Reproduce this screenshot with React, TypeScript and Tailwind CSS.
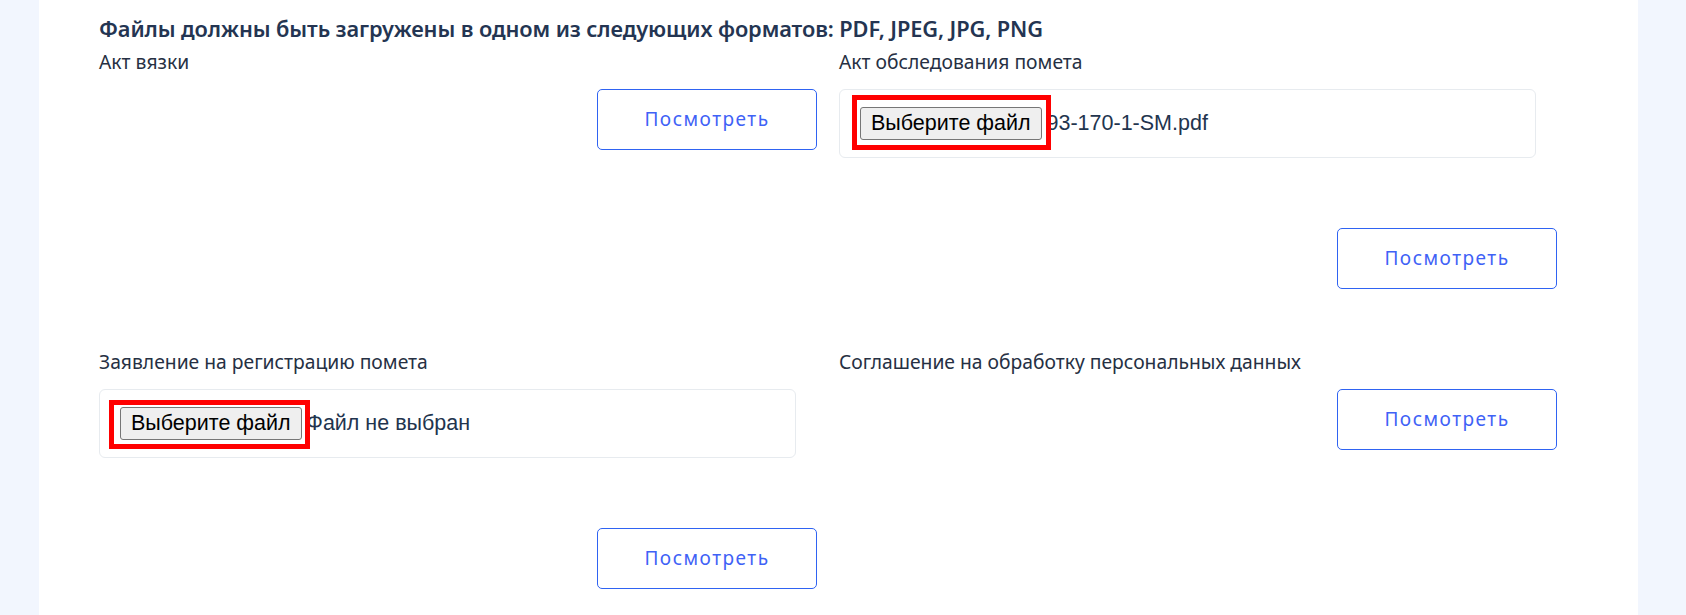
import React from "react";

const FONT = { fontFamily: '"Noto Sans", "Open Sans", sans-serif' };
const NATIVE = { fontFamily: '"Liberation Sans", Arial, sans-serif' };

function ViewButton() {
  return (
    <button
      type="button"
      className="w-[220px] h-[61px] border border-[#2f63f2] rounded-[5px] bg-white text-[#3f62f6] text-[19px] tracking-[1.5px] flex items-center justify-center"
    >
      Посмотреть
    </button>
  );
}

function FileBox({ fileName, overlay }: { fileName: string; overlay: string }) {
  return (
    <div className="w-[697px] h-[69px] border border-[#e7ebef] rounded-[6px] flex items-center pl-[20px]">
      <div className="relative flex items-center">
        <span
          className="h-[33px] px-[10px] bg-[#efefef] border border-[#767676] rounded-[3px] text-black text-[21.5px] flex items-center leading-none"
          style={NATIVE}
        >
          Выберите файл
        </span>
        <div className={"absolute border-[5px] border-[#ff0000] " + overlay} />
      </div>
      <span className="ml-[5px] text-[21.5px] text-[#22344e] leading-none" style={NATIVE}>
        {fileName}
      </span>
    </div>
  );
}

export default function App() {
  return (
    <div className="w-[1686px] h-[615px] bg-[#f2f6fe] flex overflow-hidden" style={FONT}>
      <div className="ml-[39px] w-[1599px] h-[615px] bg-white pl-[60px] pr-[81px] pt-[14px]">
        <h2 className="text-[21.8px] leading-[30px] font-semibold text-[#243552] tracking-[-0.1px]">
          Файлы должны быть загружены в одном из следующих форматов: PDF, JPEG, JPG, PNG
        </h2>
        <div className="mt-[6px] grid grid-cols-2 gap-x-[22px] gap-y-[61px] text-[#263043]">
          <div className="flex flex-col">
            <div className="text-[19.3px] leading-[24px]">Акт вязки</div>
            <div className="mt-[15px] flex justify-end">
              <ViewButton />
            </div>
          </div>
          <div className="flex flex-col">
            <div className="text-[19.3px] leading-[24px]">Акт обследования помета</div>
            <div className="mt-[15px]">
              <FileBox
                fileName="93-170-1-SM.pdf"
                overlay="-left-[8px] -top-[12px] -right-[9px] -bottom-[10px]"
              />
            </div>
            <div className="mt-[70px] flex justify-end">
              <ViewButton />
            </div>
          </div>
          <div className="flex flex-col">
            <div className="text-[19.3px] leading-[24px]">Заявление на регистрацию помета</div>
            <div className="mt-[15px]">
              <FileBox
                fileName="Файл не выбран"
                overlay="-left-[11px] -top-[7px] -right-[8px] -bottom-[9px]"
              />
            </div>
            <div className="mt-[70px] flex justify-end">
              <ViewButton />
            </div>
          </div>
          <div className="flex flex-col">
            <div className="text-[19.3px] leading-[24px]">Соглашение на обработку персональных данных</div>
            <div className="mt-[15px] flex justify-end">
              <ViewButton />
            </div>
          </div>
        </div>
      </div>
    </div>
  );
}
